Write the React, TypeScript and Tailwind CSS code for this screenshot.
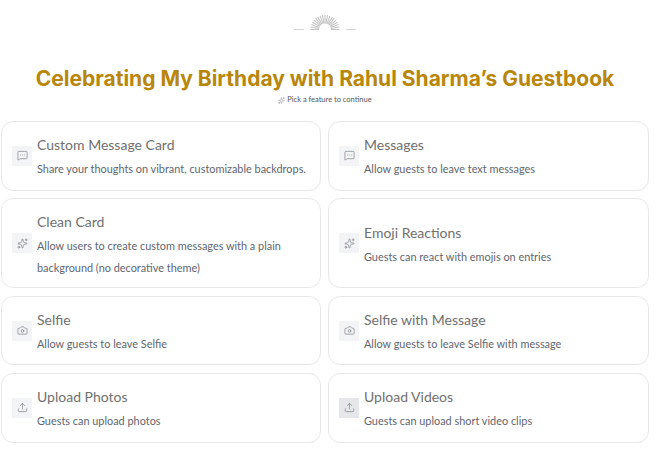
import { Camera, MessageSquareMore, Sparkles, Upload } from 'lucide-react';
import type { ReactNode } from 'react';

type Feature = { title: string; desc: string; icon: ReactNode; iconBg?: string };

const msg = <MessageSquareMore size={11} strokeWidth={1.5} />;
const spark = <Sparkles size={11} strokeWidth={1.5} />;
const cam = <Camera size={11} strokeWidth={1.5} />;
const up = <Upload size={11} strokeWidth={1.5} />;

const features: Feature[] = [
  { title: 'Custom Message Card', desc: 'Share your thoughts on vibrant, customizable backdrops.', icon: msg },
  { title: 'Messages', desc: 'Allow guests to leave text messages', icon: msg },
  { title: 'Clean Card', desc: 'Allow users to create custom messages with a plain background (no decorative theme)', icon: spark },
  { title: 'Emoji Reactions', desc: 'Guests can react with emojis on entries', icon: spark },
  { title: 'Selfie', desc: 'Allow guests to leave Selfie', icon: cam },
  { title: 'Selfie with Message', desc: 'Allow guests to leave Selfie with message', icon: cam },
  { title: 'Upload Photos', desc: 'Guests can upload photos', icon: up },
  { title: 'Upload Videos', desc: 'Guests can upload short video clips', icon: up, iconBg: 'bg-[#e5e7eb]' },
];

function Sunburst() {
  const rays = Array.from({ length: 19 }, (_, i) => {
    const a = (Math.PI * i) / 18;
    return {
      x1: 16 + Math.cos(a) * 6,
      y1: 15.5 - Math.sin(a) * 6,
      x2: 16 + Math.cos(a) * 14.5,
      y2: 15.5 - Math.sin(a) * 14.5,
    };
  });
  return (
    <svg width="32" height="16" viewBox="0 0 32 16" fill="none" stroke="#c4c4c4" strokeWidth="1.1">
      {rays.map((r, i) => (
        <line key={i} x1={r.x1} y1={r.y1} x2={r.x2} y2={r.y2} />
      ))}
    </svg>
  );
}

function FeatureCard({ f }: { f: Feature }) {
  return (
    <div className="flex items-center rounded-[12px] border border-[#e8e8e8] bg-white py-[10px] pl-[10px] pr-2">
      <div className={`flex h-5 w-5 shrink-0 items-center justify-center text-[#7b8088] ${f.iconBg ?? 'bg-[#f3f4f6]'}`}>
        {f.icon}
      </div>
      <div className="ml-[5px] min-w-0 pt-[2px]">
        <div className="text-[14px] leading-[24px] text-[#707070]">{f.title}</div>
        <div className="mt-[1px] text-[10.9px] leading-[22px] text-[#5f6670]">{f.desc}</div>
      </div>
    </div>
  );
}

export default function App() {
  return (
    <div className="h-[467px] w-[650px] overflow-hidden bg-white font-['Lato',sans-serif]">
      <div className="flex items-end justify-center gap-[5px] pt-[14px]">
        <div className="mb-[0.5px] h-px w-[10px] bg-[#d4d4d4]" />
        <Sunburst />
        <div className="mb-[0.5px] h-px w-[10px] bg-[#d4d4d4]" />
      </div>
      <h1 className="mt-[35px] text-center font-['Inter',sans-serif] text-[21px] font-bold leading-[28px] text-[#b8860b]">
        Celebrating My Birthday with Rahul Sharma’s Guestbook
      </h1>
      <div className="mb-[13.75px] flex items-center justify-center gap-[2px] text-[7.5px] leading-[14px] text-[#555]">
        <Sparkles size={7} strokeWidth={1.5} className="text-[#888]" />
        <span>Pick a feature to continue</span>
      </div>
      <div className="grid grid-cols-[320px_321px] grid-rows-[70px_90px_69.5px_70px] gap-x-[7px] gap-y-[7.5px] pl-[1px]">
        {features.map((f) => (
          <FeatureCard key={f.title} f={f} />
        ))}
      </div>
    </div>
  );
}
